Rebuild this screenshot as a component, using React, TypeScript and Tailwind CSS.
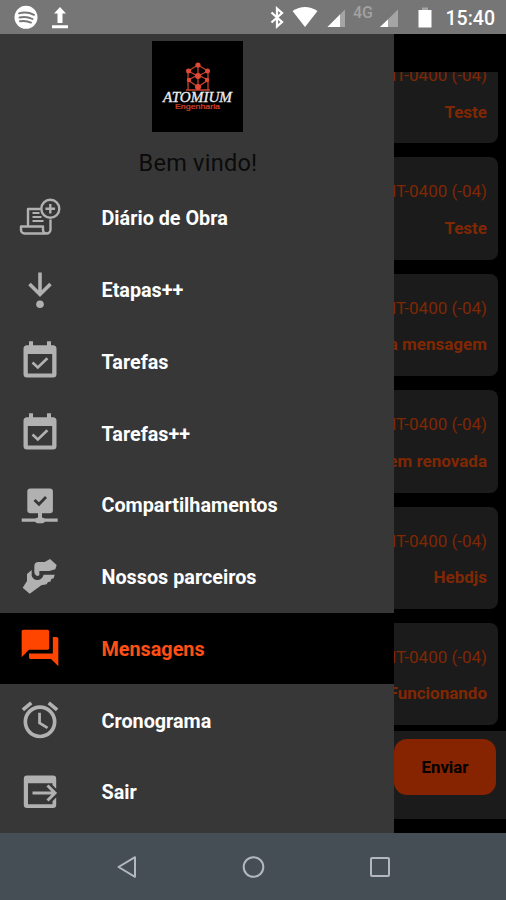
import React from 'react';

const DiaryIcon = () => (
  <svg className="w-11 h-11" viewBox="0 0 44 44" fill="none" stroke="currentColor" strokeWidth={2.4} strokeLinejoin="round">
    <path d="M22.5 13H10v17M32.5 23.500v10a4 4 0 01-4 4H6.500a3.500 3.500 0 01-3.500-3.500V30.500h22v3.500a3.500 3.500 0 003.500 3.500" />
    <path d="M14.500 17h7M14.500 21h9M14.500 25h11" strokeWidth={1.8} />
    <circle cx="32.300" cy="12.800" r="9" />
    <path d="M32.300 8v9.600M27.500 12.800h9.600" />
  </svg>
);

const StepsIcon = () => (
  <svg className="w-11 h-11" viewBox="0 0 44 44" fill="none" stroke="currentColor" strokeWidth={3.6}>
    <path d="M22 4.500v22M11.500 16L22 26.500 32.500 16" />
    <circle cx="22" cy="36.300" r="3.800" fill="currentColor" stroke="none" />
  </svg>
);

const TaskIcon = () => (
  <svg className="w-11 h-11" viewBox="0 -0.5 44 44" fill="currentColor">
    <path fillRule="evenodd" d="M11 1.800h4v4h14v-4h4v4h2a3.500 3.500 0 013.500 3.500v25.200a3.500 3.500 0 01-3.500 3.500H9a3.500 3.500 0 01-3.500-3.500V9.300A3.500 3.500 0 019 5.800h2zM9.800 14.500v19.500h24.400V14.500z" />
    <path d="M14.500 23l5.300 5 9.600-9.300" fill="none" stroke="currentColor" strokeWidth={2.6} />
  </svg>
);

const ShareIcon = () => (
  <svg className="w-11 h-11" viewBox="0 0 44 44" fill="currentColor">
    <rect x="9.300" y="5.500" width="25.600" height="24.800" rx="3" />
    <path d="M20 30h4v4.500l3 1h12.700v3.200H27l-2 1.500h-6l-2-1.500H3.700v-3.200H17l3-1z" />
    <path d="M16.500 17l4.500 4.200 7-7.200" fill="none" stroke="#373737" strokeWidth={2.8} />
  </svg>
);

const PartnersIcon = () => (
  <svg className="w-11 h-11" viewBox="54 240 132 132" fill="currentColor">
    <path d="M103 272q1-11 12-11h19l16-9 20 18-4 13-18 5h-30v13l-5 2q-10-3-10-13z" />
    <path d="M81 297l14-12v17q4 12 16 13 15 0 20-16h33l-3 11-7 2-3 8-7 1-4 7-16 3-7 5-28 20-21-18 13-20z" />
  </svg>
);

const MessagesIcon = () => (
  <svg className="w-11 h-11" viewBox="0 0 24 24" fill="currentColor">
    <path d="M21 6h-2v9H6v2c0 .55.45 1 1 1h11l4 4V7c0-.55-.45-1-1-1zm-4 6V3c0-.55-.45-1-1-1H3c-.55 0-1 .45-1 1v14l4-4h10c.55 0 1-.45 1-1z" />
  </svg>
);

const ClockIcon = () => (
  <svg className="w-11 h-11" viewBox="0 0 24 24" fill="currentColor">
    <path d="M22 5.720l-4.600-3.860-1.290 1.530 4.600 3.860L22 5.720zM7.880 3.390L6.600 1.860 2 5.710l1.290 1.530 4.590-3.850zM12.500 8H11v6l4.750 2.850.75-1.230-4-2.370V8zM12 4c-4.970 0-9 4.030-9 9s4.020 9 9 9a9 9 0 000-18zm0 16c-3.870 0-7-3.130-7-7s3.130-7 7-7 7 3.130 7 7-3.130 7-7 7z" />
  </svg>
);

const ExitIcon = () => (
  <svg className="w-11 h-11" viewBox="0 -0.5 44 44" fill="currentColor">
    <path d="M9 5h26a3.200 3.200 0 013.200 3.200v10L34.500 14.500V12.700H10v21h24.500v-3l3.700-3.700v7.300a3.200 3.200 0 01-3.200 3.200H9a3.200 3.200 0 01-3.200-3.200V8.200A3.200 3.200 0 019 5z" />
    <path d="M14.500 22.500H37M29.500 15l7.500 7.500-7.500 7.500" fill="none" stroke="currentColor" strokeWidth={3} />
  </svg>
);

const MENU = [
  { label: 'Diário de Obra', icon: <DiaryIcon /> },
  { label: 'Etapas++', icon: <StepsIcon /> },
  { label: 'Tarefas', icon: <TaskIcon /> },
  { label: 'Tarefas++', icon: <TaskIcon /> },
  { label: 'Compartilhamentos', icon: <ShareIcon /> },
  { label: 'Nossos parceiros', icon: <PartnersIcon /> },
  { label: 'Mensagens', icon: <MessagesIcon />, active: true },
  { label: 'Cronograma', icon: <ClockIcon /> },
  { label: 'Sair', icon: <ExitIcon /> },
];

const MESSAGES = ['Teste', 'Teste', 'a mensagem', 'em renovada', 'Hebdjs', 'Funcionando'];

const StatusBar: React.FC = () => (
  <div className="h-[34px] shrink-0 bg-[#767676] flex items-center justify-between text-white">
    <svg className="w-[80px] h-[34px]" viewBox="0 0 80 34">
      <circle cx="26" cy="17.300" r="11.500" fill="#fff" />
      <path d="M19 13.300q8-2 15 1.500M19.500 17.500q7-1.500 13 1.500M20 21.300q6-1 11 1.300" fill="none" stroke="#767676" strokeWidth="1.900" strokeLinecap="round" />
      <path d="M60 7l6 6.500h-3.500V23h-5v-9.500H54zM52 25.300h16v3H52z" fill="#fff" />
    </svg>
    <div className="flex items-center">
      <svg className="w-[82px] h-[34px]" viewBox="266 0 82 34">
        <path d="M271.500 12.500l10.500 9.500-5 4.500V8.500l5 4.500-10.500 9.500" fill="none" stroke="#fff" strokeWidth="2.300" />
        <path d="M292.500 11q12.500-8 25 0L305 27z" fill="#fff" />
        <path d="M345 9.500V27h-17.500z" fill="#a5a5a5" />
        <path d="M340 14.500V27h-12.500z" fill="#fff" />
      </svg>
      <span className="w-[30px] pl-[5px] text-[16px] leading-none font-medium text-[#a2a2a2] -mt-2">4G</span>
      <svg className="w-[62px] h-[34px]" viewBox="378 0 62 34">
        <path d="M398 9.500V27h-18z" fill="#a5a5a5" />
        <path d="M388 19.500V27h-8z" fill="#fff" />
        <path d="M422 7.500h6V10h-6z" fill="#a5a5a5" />
        <path d="M418.500 10h13v17.500h-13z" fill="#fff" />
      </svg>
      <span className="w-[66px] pl-[5.500px] text-[19.500px] leading-none font-medium mt-[3px]">15:40</span>
    </div>
  </div>
);

const Logo: React.FC = () => (
  <svg className="w-[91px] h-[91px] bg-black" viewBox="0 0 91 91">
    <g fill="none" stroke="#c9402e" strokeWidth="1.300">
      <path d="M46 24l-10 6v19M46 24l10 6v19M36 30l10 5 10-5M36 39l10-5 10 5-10 7zM46 24v25M34 49h24" />
    </g>
    <g fill="#e04a35">
      <circle cx="46" cy="24" r="2.600" />
      <circle cx="36.500" cy="30" r="2.500" />
      <circle cx="55.500" cy="30" r="2.500" />
      <circle cx="46" cy="35" r="3" />
      <circle cx="37" cy="39" r="2.200" />
      <circle cx="55" cy="39" r="2.200" />
      <circle cx="46" cy="46" r="3" />
    </g>
    <text x="11" y="61" textLength="69" lengthAdjust="spacingAndGlyphs" fill="#eee" fontSize="14" fontStyle="italic" fontWeight="400" stroke="#eee" strokeWidth="0.300" fontFamily="Liberation Serif, serif">ATOMIUM</text>
    <text x="23" y="68" textLength="45" lengthAdjust="spacingAndGlyphs" fill="#d8422e" fontSize="7" fontWeight="400" stroke="#d8422e" strokeWidth="0.200" fontFamily="Liberation Sans, sans-serif">Engenharia</text>
  </svg>
);

const App: React.FC = () => {
  return (
    <div className="w-[506px] h-[900px] flex flex-col overflow-hidden bg-black font-['Roboto',sans-serif]">
      <StatusBar />

      <div className="relative h-[799px] shrink-0 flex flex-col bg-black">
        {/* Message list, scrolled a little */}
        <div className="mt-[38px] h-[659px] overflow-hidden shrink-0">
          <div className="-mt-[31px] flex flex-col gap-[14px] pl-2 pr-2">
            {MESSAGES.map((text, idx) => (
              <div key={idx} className="h-[102.400px] shrink-0 rounded-lg bg-[#1b1b1b] pr-[11px] flex flex-col items-end text-[#802704]">
                <span className="mt-[23px] text-[17px] leading-[22px]">GMT-0400 (-04)</span>
                <span className="mt-[14.500px] text-[17px] leading-[22px] font-bold">{text}</span>
              </div>
            ))}
          </div>
        </div>
        <div className="h-[88px] shrink-0 bg-[#1b1b1b] flex justify-end pt-[8px] pr-[10px]">
          <button className="w-[102px] h-[56px] pt-[2px] rounded-[13px] bg-[#862300] text-black text-[16.800px] font-bold">Enviar</button>
        </div>

        {/* Drawer */}
        <div className="absolute inset-y-0 left-0 w-[394px] bg-[#373737] flex flex-col">
          <div className="h-[148px] shrink-0 flex flex-col items-center pt-[7px]">
            <Logo />
            <div className="mt-[17px] ml-[2px] h-[22px] overflow-hidden text-[23.500px] leading-[28px] tracking-[0.250px] text-[#0b0b0b]">Bem vindo!</div>
          </div>
          {MENU.map((item) => (
            <div
              key={item.label}
              className={`h-[71.750px] shrink-0 flex items-center pl-[18px] ${item.active ? 'bg-black text-[#ff4500]' : 'text-[#b1b1b1]'}`}
            >
              {item.icon}
              <span className={`ml-[39.500px] mt-[2.500px] text-[19.800px] font-bold ${item.active ? 'text-[#ff4f14]' : 'text-white'}`}>{item.label}</span>
            </div>
          ))}
        </div>
      </div>

      {/* Android navigation */}
      <div className="h-[67px] bg-[#454d55] flex items-center justify-center gap-[104px]">
        <svg className="w-[22px] h-[24px]" viewBox="-1.500 0 22 24" fill="none" stroke="#b3b8bc" strokeWidth="2"><path d="M18.500 2.200v19.600L2 12z" strokeLinejoin="round" /></svg>
        <svg className="w-[24px] h-[24px]" viewBox="0 0 24 24" fill="none" stroke="#b3b8bc" strokeWidth="2"><circle cx="12.500" cy="12" r="9.800" /></svg>
        <svg className="w-[22px] h-[24px]" viewBox="0 0 22 24" fill="none" stroke="#b3b8bc" strokeWidth="2"><rect x="2" y="3" width="18" height="18" rx="1" /></svg>
      </div>
    </div>
  );
};

export default App;
